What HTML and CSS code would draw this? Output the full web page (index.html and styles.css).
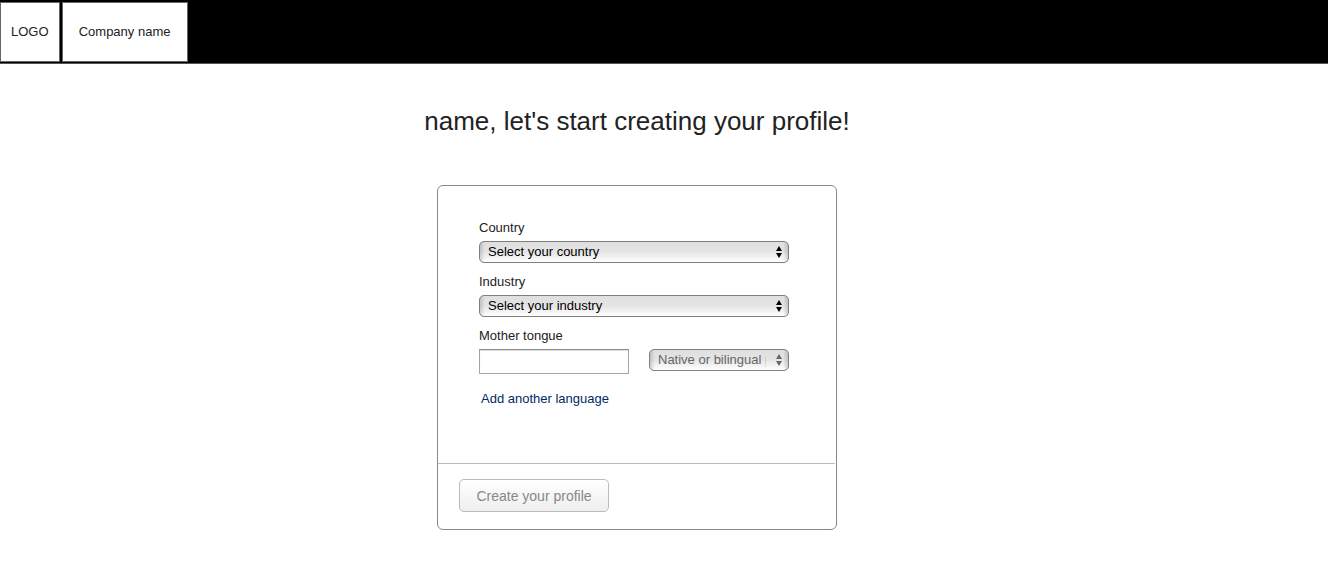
FILE: index.html
```html
<!DOCTYPE html>
<html lang="en">
<head>
    <meta charset="UTF-8">
    <meta name="viewport" content="width=device-width, initial-scale=1.0">
    <title>Create your profile</title>
    <link rel="stylesheet" href="styles.css">
</head>
<body>
    <header class="topbar">
        <div class="logo">LOGO</div>
        <div class="company">Company name</div>
    </header>
    <main class="content">
        <h1>name, let's start creating your profile!</h1>
        <form class="card">
            <div class="fields">
                <div class="field">
                    <label for="country">Country</label>
                    <div class="select">
                        <select id="country" name="country">
                            <option>Select your country</option>
                        </select>
                        <svg class="arrows" width="6" height="12" viewBox="0 0 6 12"><path d="M3 0L6 5H0zM0 7H6L3 12z"/></svg>
                    </div>
                </div>
                <div class="field">
                    <label for="industry">Industry</label>
                    <div class="select">
                        <select id="industry" name="industry">
                            <option>Select your industry</option>
                        </select>
                        <svg class="arrows" width="6" height="12" viewBox="0 0 6 12"><path d="M3 0L6 5H0zM0 7H6L3 12z"/></svg>
                    </div>
                </div>
                <div class="field">
                    <label for="language">Mother tongue</label>
                    <div class="language-row">
                        <input type="text" id="language" name="language">
                        <div class="select disabled">
                            <select name="level" aria-label="Language level" disabled>
                                <option>Native or bilingual proficiency</option>
                            </select>
                            <svg class="arrows" width="6" height="12" viewBox="0 0 6 12"><path d="M3 0L6 5H0zM0 7H6L3 12z"/></svg>
                        </div>
                    </div>
                </div>
                <a class="add-language" href="#">Add another language</a>
            </div>
            <div class="actions">
                <button type="submit" disabled>Create your profile</button>
            </div>
        </form>
    </main>
</body>
</html>
```
FILE: styles.css
```css
* {
    box-sizing: border-box;
}
body {
    margin: 0;
    font-family: "Liberation Sans", Arial, sans-serif;
    font-size: 13px;
    line-height: 16px;
    color: #222;
    background: #fff;
}
.topbar {
    display: flex;
    gap: 2px;
    padding: 2px 0 1px;
    background: #000;
    border-bottom: 1px solid #555;
}
.logo,
.company {
    padding: 21px 10px;
    background: #fff;
    border: 1px solid #666;
    text-align: center;
}
.company {
    min-width: 126px;
}
.content {
    display: flex;
    flex-direction: column;
    align-items: center;
    padding: 42px 54px 50px 0;
}
h1 {
    margin: 0 0 49px;
    font-size: 26px;
    font-weight: normal;
    line-height: 30px;
}
.card {
    width: 100%;
    max-width: 400px;
    border: 1px solid #888;
    border-radius: 6px;
}
.fields {
    padding: 34px 47px 56px 41px;
}
.field {
    margin-bottom: 11px;
}
.field label {
    display: block;
    margin-bottom: 5px;
}
.select {
    position: relative;
}
select {
    display: block;
    width: 100%;
    height: 22px;
    padding: 0 22px 0 8px;
    appearance: none;
    font: inherit;
    color: #000;
    border: 1px solid #7f7f7f;
    border-radius: 5px;
    background:
        linear-gradient(to right, rgba(0, 0, 0, 0.15), transparent 5px),
        linear-gradient(to left, rgba(0, 0, 0, 0.15), transparent 5px),
        linear-gradient(#dfdfdf, #e4e4e4 50%, #eaeaea 60%, #fff);
}
.arrows {
    position: absolute;
    top: 5px;
    right: 7px;
    pointer-events: none;
}
.language-row {
    display: flex;
    align-items: flex-start;
    gap: 20px;
}
input {
    flex: 1;
    min-width: 0;
    height: 25px;
    padding: 0 5px;
    font: inherit;
    border: 1px solid #a6a6a6;
    border-top-color: #8a8a8a;
    box-shadow: inset 0 1px 1px #ddd;
}
.language-row .select {
    flex: 0 0 140px;
}
.disabled select {
    color: #666;
    opacity: 1;
}
.disabled .arrows {
    fill: #666;
}
.add-language {
    display: inline-block;
    margin: 6px 2px 0;
    color: #002a66;
    text-decoration: none;
}
.add-language:hover {
    text-decoration: underline;
}
.actions {
    margin-right: 1px;
    padding: 15px 21px 17px;
    border-top: 1px solid #bbb;
}
button {
    min-width: 150px;
    height: 33px;
    padding: 0 16px;
    font: inherit;
    font-size: 14px;
    color: #888;
    border: 1px solid #bbb;
    border-radius: 5px;
    background: linear-gradient(#fff, #eee);
}
```
